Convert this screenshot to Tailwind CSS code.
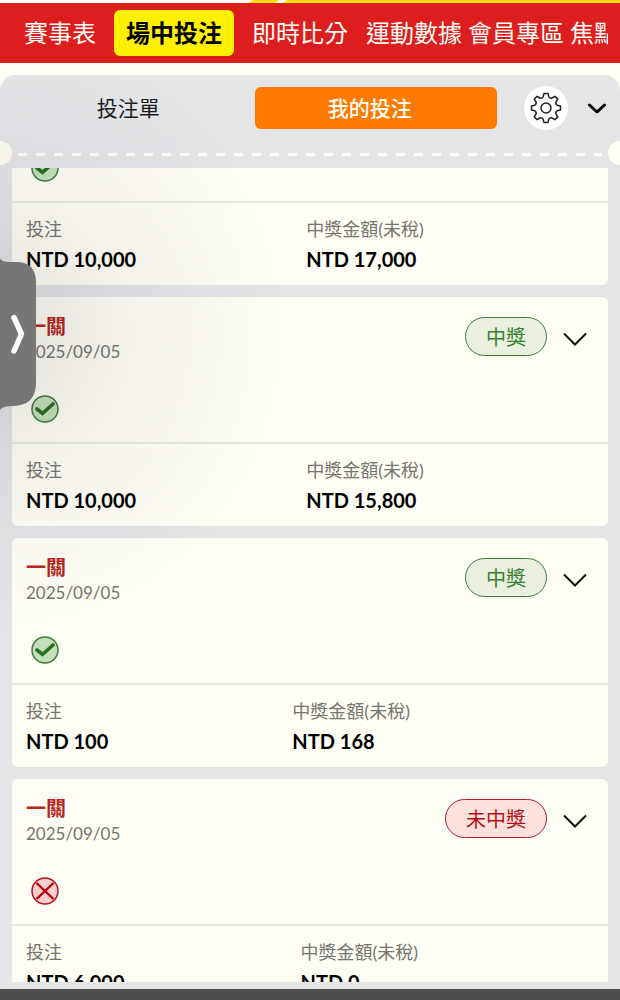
<!DOCTYPE html>
<html lang="zh-Hant">

<head>
    <meta charset="UTF-8">
    <meta name="viewport" content="width=device-width, initial-scale=1.0">
    <title>我的投注</title>
    <script src="https://cdn.jsdelivr.net/npm/@tailwindcss/browser@4"></script>
</head>

<body class="relative h-screen flex flex-col overflow-hidden bg-[#fffef5] font-['Lato','Noto_Sans_CJK_TC',sans-serif] text-black">

    <!-- shared icons -->
    <svg class="hidden">
        <symbol id="icon-win" viewBox="0 0 28 28">
            <circle cx="14" cy="14" r="13" fill="#c3e0bb" stroke="#3f7a38" stroke-width="1.5" />
            <path d="M6 14l5.5 4.5L22 9" fill="none" stroke="#2a6e20" stroke-width="3.6" stroke-linecap="round" />
        </symbol>
        <symbol id="icon-lose" viewBox="0 0 28 28">
            <circle cx="14" cy="14" r="13" fill="#f8cfcd" stroke="#b5121b" stroke-width="1.5" />
            <path d="M5.5 6l17 16M22.5 6l-17 16" fill="none" stroke="#b5000b" stroke-width="2.4" />
        </symbol>
        <symbol id="icon-down" viewBox="0 0 24 14">
            <path d="M1 1.5l11 11l11-11" fill="none" stroke="#111" stroke-width="2" />
        </symbol>
    </svg>

    <svg class="block h-[3px] w-full shrink-0" viewBox="0 0 620 3" preserveAspectRatio="none">
        <path d="M253 0h26l-4 3h-26zM287 0h333v3H283z" fill="#ffdd0a" />
    </svg>

    <nav class="flex h-[60px] shrink-0 items-center bg-[#dc1e1f] pl-6 pr-3 text-2xl text-[#fffef5]">
        <div class="flex flex-1 items-center overflow-hidden whitespace-nowrap">
            <a href="#" class="shrink-0">賽事表</a>
            <a href="#" class="ml-[18px] flex h-[46px] shrink-0 items-center rounded-md bg-[#fff000] px-3 font-bold text-black">場中投注</a>
            <a href="#" class="ml-[18px] shrink-0">即時比分</a>
            <a href="#" class="ml-[18px] shrink-0">運動數據</a>
            <a href="#" class="ml-1.5 shrink-0">會員專區</a>
            <a href="#" class="ml-1.5 shrink-0">焦點</a>
        </div>
    </nav>

    <main class="mt-3 flex min-h-0 flex-1 flex-col rounded-t-2xl bg-[#e4e5e7] pb-[7px]">
        <header class="relative h-[93px] shrink-0 pt-[11px]">
            <div class="flex h-11 items-center pl-[7px] pr-[13px]">
                <div class="grid flex-1 grid-cols-2 gap-[5px] text-[21px]">
                    <button class="h-[42px] rounded-md text-[#1c1c1c]">投注單</button>
                    <button class="h-[42px] rounded-md bg-[#ff7b00] pr-3 font-medium text-[#fffef5]">我的投注</button>
                </div>
                <button class="ml-[27px] flex size-11 items-center justify-center rounded-full bg-white" aria-label="設定">
                    <svg class="size-8" viewBox="-16 -16 32 32" fill="none" stroke="#222" stroke-width="1.5" stroke-linejoin="round">
                        <circle r="5" />
                        <path d="M-2 -14.5H2L2.8 -11.2Q4 -9.2 6 -10L8.9 -11.7L11.700 -8.9L10 -6Q9.200 -4 11.200 -2.800L14.500 -2V2L11.200 2.800Q9.200 4 10 6L11.700 8.900L8.900 11.700L6 10Q4 9.200 2.800 11.200L2 14.500H-2L-2.800 11.200Q-4 9.200 -6 10L-8.900 11.700L-11.700 8.900L-10 6Q-9.200 4 -11.200 2.800L-14.500 2V-2L-11.200 -2.800Q-9.200 -4 -10 -6L-11.700 -8.900L-8.900 -11.700L-6 -10Q-4 -9.200 -2.800 -11.200Z" />
                    </svg>
                </button>
                <button class="ml-[19px]" aria-label="收合">
                    <svg class="block h-3 w-5" viewBox="0 0 20 12" fill="none" stroke="#000" stroke-width="3" stroke-linecap="round" stroke-linejoin="round">
                        <path d="M2.5 3l7.5 7L17.5 3" />
                    </svg>
                </button>
            </div>
            <!-- ticket tear line -->
            <div class="mx-[18px] mt-[23px] h-[3px] bg-[repeating-linear-gradient(90deg,#fffef8_0_9px,transparent_9px_18px)]"></div>
            <div class="absolute left-0 top-[66px] h-6 w-3 rounded-r-full bg-[#fffdf1]"></div>
            <div class="absolute right-0 top-[66px] h-6 w-3 rounded-l-full bg-[#fffef5]"></div>
        </header>

        <div class="mx-3 flex min-h-0 flex-1 flex-col gap-3 overflow-hidden">
            <article class="-mt-3.5 h-[131px] shrink-0 rounded-b-md bg-[#fffef5]">
                <div class="h-[49px] border-b-2 border-[#e9e9e2] px-3.5">
                    <svg class="ml-[5px] size-7"><use href="#icon-win" /></svg>
                </div>
                <dl class="flex px-3.5 pt-[11px]">
                    <div class="flex-auto">
                        <dt class="text-lg leading-[30px] text-[#757570]">投注</dt>
                        <dd class="text-xl leading-[30px] font-bold">NTD 10,000</dd>
                    </div>
                    <div class="flex-auto">
                        <dt class="text-lg leading-[30px] text-[#757570]">中獎金額(未稅)</dt>
                        <dd class="text-xl leading-[30px] font-bold">NTD 17,000</dd>
                    </div>
                </dl>
            </article>

            <article class="h-[229px] shrink-0 rounded-md bg-[#fffef5]">
                <div class="h-[147px] border-b-2 border-[#e9e9e2] px-3.5 pt-4">
                    <div class="flex items-start justify-between">
                        <div>
                            <h2 class="text-xl leading-[26px] font-bold text-[#b82420]">一關</h2>
                            <p class="text-[17px] leading-[26px] text-[#757570]">2025/09/05</p>
                        </div>
                        <div class="flex items-center gap-4 pt-1 pr-[7px]">
                            <span class="flex h-[39px] items-center rounded-full border border-[#3f7d38] bg-[#ebefe0] px-5 text-xl text-[#37812e]">中獎</span>
                            <button class="pt-1" aria-label="展開"><svg class="block h-3.5 w-6"><use href="#icon-down" /></svg></button>
                        </div>
                    </div>
                    <svg class="mt-[30px] ml-[5px] size-7"><use href="#icon-win" /></svg>
                </div>
                <dl class="flex px-3.5 pt-[11px]">
                    <div class="flex-auto">
                        <dt class="text-lg leading-[30px] text-[#757570]">投注</dt>
                        <dd class="text-xl leading-[30px] font-bold">NTD 10,000</dd>
                    </div>
                    <div class="flex-auto">
                        <dt class="text-lg leading-[30px] text-[#757570]">中獎金額(未稅)</dt>
                        <dd class="text-xl leading-[30px] font-bold">NTD 15,800</dd>
                    </div>
                </dl>
            </article>

            <article class="h-[229px] shrink-0 rounded-md bg-[#fffef5]">
                <div class="h-[147px] border-b-2 border-[#e9e9e2] px-3.5 pt-4">
                    <div class="flex items-start justify-between">
                        <div>
                            <h2 class="text-xl leading-[26px] font-bold text-[#b82420]">一關</h2>
                            <p class="text-[17px] leading-[26px] text-[#757570]">2025/09/05</p>
                        </div>
                        <div class="flex items-center gap-4 pt-1 pr-[7px]">
                            <span class="flex h-[39px] items-center rounded-full border border-[#3f7d38] bg-[#ebefe0] px-5 text-xl text-[#37812e]">中獎</span>
                            <button class="pt-1" aria-label="展開"><svg class="block h-3.5 w-6"><use href="#icon-down" /></svg></button>
                        </div>
                    </div>
                    <svg class="mt-[30px] ml-[5px] size-7"><use href="#icon-win" /></svg>
                </div>
                <dl class="flex px-3.5 pt-[11px]">
                    <div class="flex-auto">
                        <dt class="text-lg leading-[30px] text-[#757570]">投注</dt>
                        <dd class="text-xl leading-[30px] font-bold">NTD 100</dd>
                    </div>
                    <div class="flex-auto">
                        <dt class="text-lg leading-[30px] text-[#757570]">中獎金額(未稅)</dt>
                        <dd class="text-xl leading-[30px] font-bold">NTD 168</dd>
                    </div>
                </dl>
            </article>

            <article class="h-[229px] shrink-0 rounded-md bg-[#fffef5]">
                <div class="h-[147px] border-b-2 border-[#e9e9e2] px-3.5 pt-4">
                    <div class="flex items-start justify-between">
                        <div>
                            <h2 class="text-xl leading-[26px] font-bold text-[#b82420]">一關</h2>
                            <p class="text-[17px] leading-[26px] text-[#757570]">2025/09/05</p>
                        </div>
                        <div class="flex items-center gap-4 pt-1 pr-[7px]">
                            <span class="flex h-[39px] items-center rounded-full border border-[#b5202a] bg-[#fae1dc] px-5 text-xl text-[#b5101a]">未中獎</span>
                            <button class="pt-1" aria-label="展開"><svg class="block h-3.5 w-6"><use href="#icon-down" /></svg></button>
                        </div>
                    </div>
                    <svg class="mt-[30px] ml-[5px] size-7"><use href="#icon-lose" /></svg>
                </div>
                <dl class="flex px-3.5 pt-[11px]">
                    <div class="flex-auto">
                        <dt class="text-lg leading-[30px] text-[#757570]">投注</dt>
                        <dd class="text-xl leading-[30px] font-bold">NTD 6,000</dd>
                    </div>
                    <div class="flex-auto">
                        <dt class="text-lg leading-[30px] text-[#757570]">中獎金額(未稅)</dt>
                        <dd class="text-xl leading-[30px] font-bold">NTD 0</dd>
                    </div>
                </dl>
            </article>
        </div>
    </main>

    <div class="h-[11px] shrink-0 bg-[#4d4d4d]"></div>

    <!-- side drawer handle and its soft shadow -->
    <div class="pointer-events-none absolute left-0 top-[75px] h-[640px] w-80 bg-[radial-gradient(ellipse_290px_300px_at_0_260px,rgb(30_25_40/0.13),rgb(30_25_40/0.05)_45%,transparent)]"></div>
    <button class="absolute left-0 top-[256px]" aria-label="開啟側欄">
        <svg class="block h-[156px] w-9" viewBox="0 0 36 156">
            <path d="M0 2Q1 6 10 6H16C30 6 36 13 36 27V126C36 142 29 149 14 150Q2 150 0 154Z" fill="#767675" />
            <path d="M14 61.5L21.5 78L14 95" fill="none" stroke="#fff" stroke-width="5.5" stroke-linecap="round" stroke-linejoin="round" />
        </svg>
    </button>

</body>

</html>
